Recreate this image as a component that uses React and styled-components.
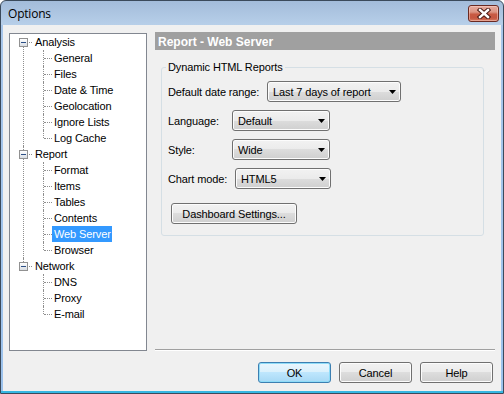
import React from 'react';
import styled, { createGlobalStyle, css } from 'styled-components';

const GlobalStyle = createGlobalStyle`
  html, body { margin: 0; padding: 0; background: #ffffff; }
  body { font-family: "Liberation Sans", Arial, sans-serif; font-size: 11px; letter-spacing: -0.12px; color: #000; }
  * { box-sizing: border-box; }
`;

const Window = styled.div`
  width: 504px;
  height: 394px;
  display: flex;
  flex-direction: column;
  border: 1px solid #3b4a5b;
  border-radius: 6px 6px 0 0;
  overflow: hidden;
  background: linear-gradient(to bottom, #a3bcda 0, #b7cfe9 24px, #a8c6ea 24px, #9cc2ec calc(100% - 2px), #36b7e2 calc(100% - 2px));
`;

const TitleBar = styled.div`
  height: 24px;
  flex: none;
  display: flex;
  align-items: center;
  padding: 0 4px 0 7px;
`;

const Title = styled.div`
  flex: 1;
  font-family: "Open Sans", "Noto Sans", sans-serif;
  font-size: 12px;
  letter-spacing: -0.2px;
  color: #000;
  padding-top: 1px;
`;

const CloseButton = styled.div`
  width: 31px;
  height: 17px;
  border: 1px solid #6a2a22;
  border-radius: 3px;
  background: linear-gradient(to bottom, #e7aa9d 0%, #dc9584 40%, #c85a43 55%, #c65640 80%, #d67c62 100%);
  box-shadow: inset 0 0 0 1px rgba(255, 220, 210, 0.45);
  display: flex;
  align-items: center;
  justify-content: center;
`;

const Body = styled.div`
  flex: 1;
  margin: 0 2px 2px;
  background: #f0f0f0;
  padding: 7px 6px 8px 6px;
  display: flex;
  flex-direction: column;
`;

const Main = styled.div`
  height: 319px;
  display: flex;
  gap: 8px;
`;

const Tree = styled.div`
  width: 138px;
  margin-top: 1px;
  background: #fff;
  border: 1px solid #828790;
`;

const dotted = '1px dotted #8f8f8f';

const RootNode = styled.div`
  position: relative;
  &::before {
    content: '';
    position: absolute;
    left: 13px;
    border-left: ${dotted};
    ${(p) =>
      p.$last
        ? css`top: 0; height: 8px;`
        : css`top: ${p.$first ? '8px' : '0'}; bottom: 0;`}
  }
`;

const RootRow = styled.div`
  position: relative;
  height: 16px;
  display: flex;
  align-items: center;
  padding-left: 9px;
  &::after {
    content: '';
    position: absolute;
    left: 14px;
    width: 8px;
    top: 8px;
    border-top: ${dotted};
  }
`;

const ExpandBox = styled.div`
  position: relative;
  z-index: 1;
  width: 9px;
  height: 9px;
  border: 1px solid #919191;
  background: linear-gradient(to bottom, #ffffff, #d8dde3);
  display: flex;
  align-items: center;
  justify-content: center;
  &::before {
    content: '';
    width: 5px;
    height: 1px;
    background: #2c4f86;
  }
`;

const Label = styled.span`
  display: inline-block;
  line-height: 16px;
  height: 16px;
  padding: 0 1px 0 2px;
  white-space: nowrap;
  margin-left: ${(p) => p.$indent || 0}px;
  background: ${(p) => (p.$selected ? '#3399ff' : 'transparent')};
  color: ${(p) => (p.$selected ? '#fff' : '#000')};
`;

const ChildRow = styled.div`
  position: relative;
  height: 16px;
  padding-left: 42px;
  &::before {
    content: '';
    position: absolute;
    left: 33px;
    top: 0;
    border-left: ${dotted};
    ${(p) => (p.$last ? css`height: 8px;` : css`bottom: 0;`)}
  }
  &::after {
    content: '';
    position: absolute;
    left: 34px;
    width: 8px;
    top: 8px;
    border-top: ${dotted};
  }
`;

const Panel = styled.div`
  width: 340px;
  display: flex;
  flex-direction: column;
`;

const Header = styled.div`
  height: 18px;
  background: #a0a0a0;
  color: #fff;
  font-weight: bold;
  font-size: 12px;
  letter-spacing: 0;
  line-height: 16px;
  padding: 2px 0 0 3px;
`;

const GroupBox = styled.div`
  position: relative;
  margin: 17px 11px 0 6px;
  border: 1px solid #d5dfe5;
  border-radius: 3px;
  padding: 13px 6px 11px;
  display: flex;
  flex-direction: column;
  gap: 8px;
`;

const Legend = styled.span`
  position: absolute;
  top: -7px;
  left: 4px;
  padding: 0 2px;
  line-height: 13px;
  background: #f0f0f0;
`;

const FieldRow = styled.div`
  height: 21px;
  display: flex;
  align-items: center;
`;

const FieldLabel = styled.span`
  width: ${(p) => p.$width}px;
  flex: none;
  white-space: nowrap;
`;

const winButton = css`
  border: 1px solid #707070;
  border-radius: 3px;
  background: linear-gradient(to bottom, #f2f2f2 0%, #ebebeb 50%, #dddddd 50%, #cfcfcf 100%);
  box-shadow: inset 0 0 0 1px #fcfcfc;
`;

const Select = styled.div`
  ${winButton}
  width: ${(p) => p.$width}px;
  height: 21px;
  display: flex;
  align-items: center;
  padding: 0 4px 0 5px;
`;

const SelectText = styled.span`
  flex: 1;
  white-space: nowrap;
`;

const Button = styled.div`
  ${winButton}
  width: ${(p) => p.$width || 73}px;
  height: 21px;
  display: flex;
  align-items: center;
  justify-content: center;
  white-space: nowrap;
  ${(p) =>
    p.$default &&
    css`
      border-color: #3c7fb1;
      background: linear-gradient(to bottom, #eaf6fd 0%, #d9f0fc 50%, #bee6fd 50%, #a7d9f5 100%);
      box-shadow: inset 0 0 0 1px #8fdcf8;
    `}
`;

const DashButton = styled(Button)`
  margin: 6px 0 0 3px;
`;

const Spacer = styled.div`
  flex: 1;
`;

const Separator = styled.div`
  height: 2px;
  border-top: 1px solid #a0a0a0;
  border-bottom: 1px solid #ffffff;
`;

const Footer = styled.div`
  margin-top: 11px;
  padding-right: 2px;
  display: flex;
  justify-content: flex-end;
  gap: 8px;
`;

const tree = [
  { label: 'Analysis', children: ['General', 'Files', 'Date & Time', 'Geolocation', 'Ignore Lists', 'Log Cache'] },
  { label: 'Report', children: ['Format', 'Items', 'Tables', 'Contents', 'Web Server', 'Browser'] },
  { label: 'Network', children: ['DNS', 'Proxy', 'E-mail'] },
];

const fields = [
  { label: 'Default date range:', labelWidth: 99, value: 'Last 7 days of report', width: 134 },
  { label: 'Language:', labelWidth: 64, value: 'Default', width: 98 },
  { label: 'Style:', labelWidth: 64, value: 'Wide', width: 98 },
  { label: 'Chart mode:', labelWidth: 67, value: 'HTML5', width: 96 },
];

const Arrow = () => (
  <svg width="7" height="4" viewBox="0 0 7 4">
    <polygon points="0,0 7,0 3.5,4" fill="#000" />
  </svg>
);

const CloseX = () => (
  <svg width="14" height="11" viewBox="0 0 14 11">
    <path d="M3 2 L11 9 M11 2 L3 9" stroke="#4a1a14" strokeWidth="4.4" strokeLinecap="square" fill="none" />
    <path d="M3 2 L11 9 M11 2 L3 9" stroke="#ffffff" strokeWidth="2.4" strokeLinecap="square" fill="none" />
  </svg>
);

export default function App() {
  return (
    <>
      <GlobalStyle />
      <Window>
        <TitleBar>
          <Title>Options</Title>
          <CloseButton>
            <CloseX />
          </CloseButton>
        </TitleBar>
        <Body>
          <Main>
            <Tree>
              {tree.map((node, i) => (
                <RootNode key={node.label} $first={i === 0} $last={i === tree.length - 1}>
                  <RootRow>
                    <ExpandBox />
                    <Label $indent={5}>{node.label}</Label>
                  </RootRow>
                  {node.children.map((c, j) => (
                    <ChildRow key={c} $last={j === node.children.length - 1}>
                      <Label $selected={c === 'Web Server'}>{c}</Label>
                    </ChildRow>
                  ))}
                </RootNode>
              ))}
            </Tree>
            <Panel>
              <Header>Report - Web Server</Header>
              <GroupBox>
                <Legend>Dynamic HTML Reports</Legend>
                {fields.map((f) => (
                  <FieldRow key={f.label}>
                    <FieldLabel $width={f.labelWidth}>{f.label}</FieldLabel>
                    <Select $width={f.width}>
                      <SelectText>{f.value}</SelectText>
                      <Arrow />
                    </Select>
                  </FieldRow>
                ))}
                <DashButton $width={126}>Dashboard Settings...</DashButton>
              </GroupBox>
              <Spacer />
              <Separator />
            </Panel>
          </Main>
          <Footer>
            <Button $default>OK</Button>
            <Button>Cancel</Button>
            <Button>Help</Button>
          </Footer>
        </Body>
      </Window>
    </>
  );
}
